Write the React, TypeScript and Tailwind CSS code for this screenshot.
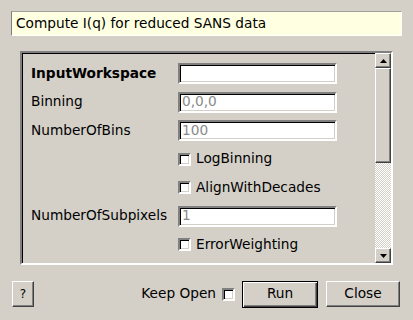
import React from "react";

const sunken =
  "border-2 border-t-[#808080] border-l-[#808080] border-b-white border-r-white shadow-[inset_1px_1px_0_#000,inset_-1px_-1px_0_#d4d0c8]";
const raised =
  "border border-t-white border-l-white border-b-[#404040] border-r-[#404040] shadow-[inset_-1px_-1px_0_#808080] bg-[#d4d0c8]";

function TextField({ value }: { value: string }) {
  return (
    <div className={`w-[159px] h-[21px] bg-white flex items-center px-[2px] text-[#8a8a8a] ${sunken}`}>
      {value}
    </div>
  );
}

function CheckBox() {
  return <div className={`w-[13px] h-[13px] bg-white ${sunken}`} />;
}

function FieldRow({ label, value, bold = false }: { label: string; value: string; bold?: boolean }) {
  return (
    <div className="flex items-center h-[21px]">
      <span className={`w-[147px] ${bold ? "font-bold" : ""}`}>{label}</span>
      <TextField value={value} />
    </div>
  );
}

function CheckRow({ label }: { label: string }) {
  return (
    <div className="flex items-center h-[21px] pl-[147px] gap-[5px]">
      <CheckBox />
      <span>{label}</span>
    </div>
  );
}

function Arrow({ down = false }: { down?: boolean }) {
  return (
    <svg width="7" height="4" viewBox="0 0 7 4">
      <polygon points={down ? "0,0 7,0 3.5,4" : "0,4 7,4 3.5,0"} fill="#000" />
    </svg>
  );
}

function ScrollBar() {
  return (
    <div className="w-[16px] h-full flex flex-col">
      <div className={`h-[15px] flex items-center justify-center ${raised}`}>
        <Arrow />
      </div>
      <div className={`h-[95px] ${raised}`} />
      <div className="flex-1 bg-[repeating-conic-gradient(#d4d0c8_0%_25%,#ffffff_0%_50%)] bg-size-[2px_2px]" />
      <div className={`h-[15px] flex items-center justify-center ${raised}`}>
        <Arrow down />
      </div>
    </div>
  );
}

export default function App() {
  return (
    <div
      className="w-[413px] h-[320px] bg-[#d4d0c8] text-black text-[13.7px] leading-none flex flex-col overflow-hidden"
      style={{ fontFamily: "'DejaVu Sans', sans-serif" }}
    >
      <div className="mx-[11px] mt-[11px] h-[25px] bg-[#ffffe1] border border-t-[#a0a0a0] border-l-[#808080] border-b-white border-r-white flex items-center pl-[4px]">
        Compute I(q) for reduced SANS data
      </div>

      <div className={`ml-[20px] mt-[15px] w-[373px] h-[214px] flex ${sunken}`}>
        <div className="flex-1 flex flex-col gap-[7.5px] pl-[9px] pt-[10px]">
          <FieldRow label="InputWorkspace" value="" bold />
          <FieldRow label="Binning" value="0,0,0" />
          <FieldRow label="NumberOfBins" value="100" />
          <CheckRow label="LogBinning" />
          <CheckRow label="AlignWithDecades" />
          <FieldRow label="NumberOfSubpixels" value="1" />
          <CheckRow label="ErrorWeighting" />
        </div>
        <ScrollBar />
      </div>

      <div className="mt-[16px] h-[26px] flex items-center pl-[12px] pr-[13px]">
        <div className={`w-[22px] h-[26px] flex items-center justify-center text-[12px] ${raised}`}>?</div>
        <span className="ml-auto">Keep Open</span>
        <div className="ml-[6px]">
          <CheckBox />
        </div>
        <div className="ml-[7px] w-[76px] h-[27px] border border-black bg-[#d4d0c8] shadow-[inset_1px_1px_0_#fff,inset_-1px_-1px_0_#404040,inset_-2px_-2px_0_#808080] flex items-center justify-center">
          Run
        </div>
        <div className={`ml-[8px] w-[74px] h-[26px] flex items-center justify-center ${raised}`}>Close</div>
      </div>
    </div>
  );
}
